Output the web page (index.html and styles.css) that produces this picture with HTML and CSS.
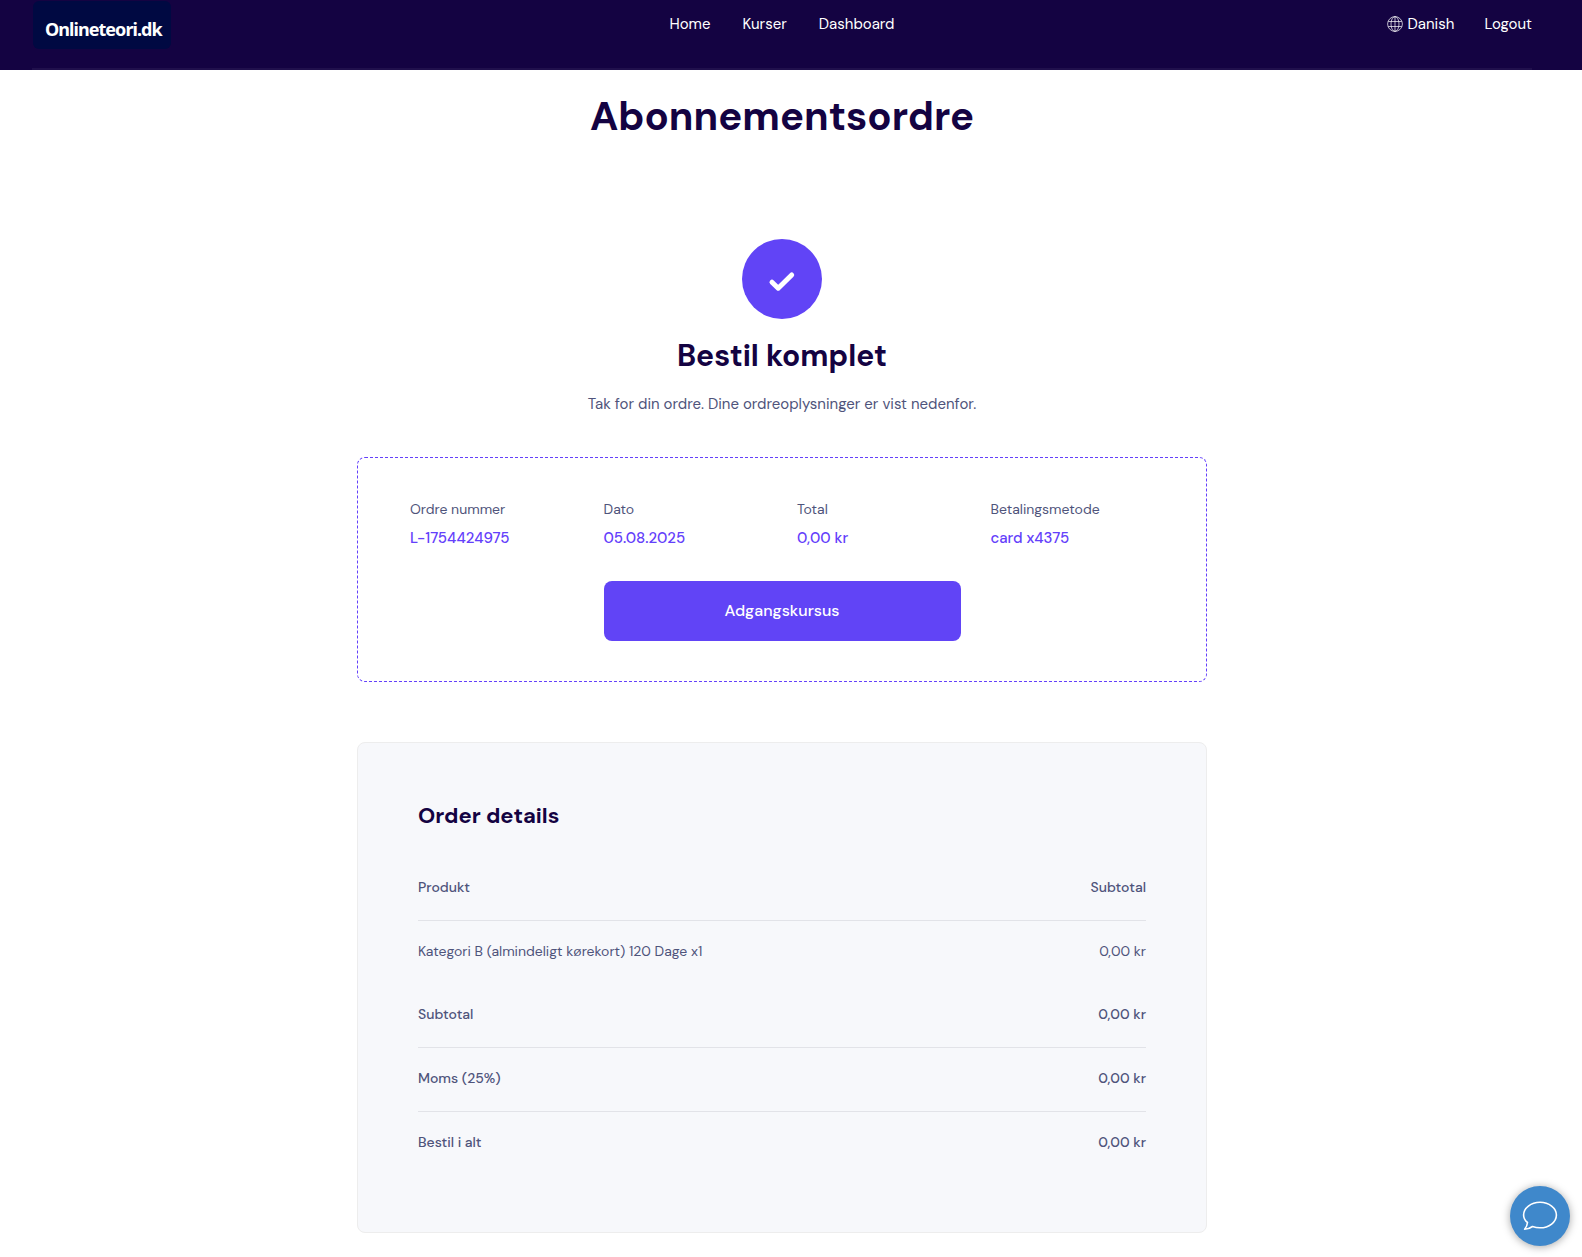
FILE: index.html
```html
<!DOCTYPE html>
<html lang="da">
<head>
  <meta charset="UTF-8" />
  <meta name="viewport" content="width=device-width, initial-scale=1.0"/>
  <title>Abonnementsordre</title>
  <link rel="stylesheet" href="styles.css">
</head>
<body>

  <header class="header">
    <div class="header-inner">
      <a class="logo" href="#">Onlineteori.dk</a>
      <nav class="menu">
        <a href="#">Home</a>
        <a href="#">Kurser</a>
        <a href="#">Dashboard</a>
      </nav>
      <div class="account">
        <a class="language" href="#">
          <svg width="16" height="16" viewBox="0 0 16 16" fill="none" stroke="currentColor" stroke-width="0.7">
            <circle cx="8" cy="8" r="7.4"/>
            <ellipse cx="8" cy="8" rx="4" ry="7.4"/>
            <path d="M8 .6v14.8M1.200 5.500h13.600M1.200 10.500h13.600"/>
          </svg>
          <span>Danish</span>
        </a>
        <a href="#">Logout</a>
      </div>
    </div>
  </header>

  <main class="page">
    <h1>Abonnementsordre</h1>

    <section class="completed">
      <div class="completed-icon">
        <svg width="28" height="22" viewBox="0 0 28 22" fill="none" stroke="#fff" stroke-width="5" stroke-linecap="round" stroke-linejoin="round">
          <path d="M4 11.2l6.2 6L23.7 4"/>
        </svg>
      </div>
      <h2>Bestil komplet</h2>
      <p>Tak for din ordre. Dine ordreoplysninger er vist nedenfor.</p>
    </section>

    <section class="summary">
      <div class="summary-grid">
        <div>
          <div class="label">Ordre nummer</div>
          <div class="value">L-1754424975</div>
        </div>
        <div>
          <div class="label">Dato</div>
          <div class="value">05.08.2025</div>
        </div>
        <div>
          <div class="label">Total</div>
          <div class="value">0,00 kr</div>
        </div>
        <div>
          <div class="label">Betalingsmetode</div>
          <div class="value">card x4375</div>
        </div>
      </div>
      <a class="button" href="#">Adgangskursus</a>
    </section>

    <section class="details">
      <h5>Order details</h5>
      <div class="row line medium"><span>Produkt</span><span>Subtotal</span></div>
      <div class="row"><span>Kategori B (almindeligt kørekort) 120 Dage x1</span><span>0,00 kr</span></div>
      <div class="row line medium"><span>Subtotal</span><span>0,00 kr</span></div>
      <div class="row line medium"><span>Moms (25%)</span><span>0,00 kr</span></div>
      <div class="row medium"><span>Bestil i alt</span><span>0,00 kr</span></div>
    </section>
  </main>

  <button class="chat" aria-label="Chat">
    <svg width="36" height="30" viewBox="0 0 36 30" fill="none" stroke="#fff" stroke-width="1.6" stroke-linejoin="round">
      <path d="M5.500 21.500C2.800 19.400 1.600 16.900 1.600 14 1.600 7 8.900 1.300 18 1.300S34.400 7 34.400 14 27.100 26.800 18 26.800c-2.700 0-5.300-.5-7.500-1.300C8.400 27 5.700 28.300 2.600 28.300c1.700-2 2.700-4.300 2.900-6.800z"/>
    </svg>
  </button>

</body>
</html>
```

FILE: styles.css
```css
* {
  box-sizing: border-box;
}

body {
  margin: 0;
  font-family: 'DM Sans', 'Inter', sans-serif;
  font-size: 15px;
  line-height: 26px;
  background-color: #ffffff;
  color: #4f547b;
  height: 1257px;
  overflow: hidden;
  -webkit-font-smoothing: antialiased;
}

a {
  color: inherit;
  text-decoration: none;
}

.header {
  height: 70px;
  background-color: #140342;
  color: #ffffff;
}

.header-inner {
  width: 1500px;
  height: 70px;
  margin-left: 32px;
  display: grid;
  grid-template-columns: 1fr auto 1fr;
  align-items: start;
  border-bottom: 2px solid #20104c;
}

.logo {
  width: 138px;
  height: 48px;
  margin: 1px 0 0 1px;
  padding: 15px 0 0 12px;
  border-radius: 6px;
  background-color: #000942;
  font-family: 'Noto Sans', sans-serif;
  font-size: 18px;
  font-weight: 700;
  letter-spacing: -0.95px;
}

.menu {
  display: flex;
  gap: 32px;
  padding-top: 11px;
}

.account {
  display: flex;
  justify-content: flex-end;
  gap: 30px;
  padding-top: 11px;
}

.language {
  display: flex;
  align-items: center;
  gap: 5px;
}

.page {
  width: 850px;
  margin-left: 357px;
}

h1, h2, h5, p {
  margin: 0;
}

h1, h2, h5 {
  color: #140342;
  font-weight: 700;
}

h1 {
  padding-top: 20px;
  font-size: 40px;
  line-height: 52px;
  text-align: center;
}

.completed {
  display: flex;
  flex-direction: column;
  align-items: center;
  margin-top: 97px;
}

.completed-icon {
  width: 80px;
  height: 80px;
  border-radius: 50%;
  background-color: #6144f6;
  display: flex;
  align-items: center;
  justify-content: center;
  padding-top: 5px;
}

.completed h2 {
  margin-top: 14px;
  font-size: 30px;
  line-height: 45px;
}

.completed p {
  margin-top: 13px;
}

.summary {
  height: 225px;
  margin-top: 40px;
  padding: 38px 52px 0;
  border: 1px dashed #6440fb;
  border-radius: 8px;
}

.summary-grid {
  display: grid;
  grid-template-columns: repeat(4, 193.5px);
}

.label {
  font-size: 14px;
}

.value {
  margin-top: 3px;
  font-weight: 500;
  color: #6440fb;
}

.button {
  display: flex;
  align-items: center;
  justify-content: center;
  width: 357px;
  height: 60px;
  margin: 30px 0 0 194px;
  padding-right: 1px;
  border-radius: 8px;
  background-color: #6144f6;
  color: #ffffff;
  font-size: 16px;
  font-weight: 500;
}

.details {
  height: 491px;
  margin-top: 60px;
  padding: 55px 60px 0;
  border: 1px solid #ededed;
  border-radius: 8px;
  background-color: #f7f8fb;
}

.details h5 {
  font-size: 22px;
  line-height: 36px;
  margin-bottom: 23px;
}

.row {
  display: flex;
  justify-content: space-between;
  height: 63px;
  padding-top: 17px;
  font-size: 14px;
}

.line {
  height: 64px;
  border-bottom: 1px solid #e2e3e8;
}

.medium {
  font-weight: 500;
}

.chat {
  position: fixed;
  right: 12px;
  bottom: 11px;
  width: 60px;
  height: 60px;
  padding: 0;
  border: 0;
  border-radius: 50%;
  background-color: #3f88cb;
  box-shadow: 0 1px 8px rgba(0,0,0,0.35);
  display: flex;
  align-items: center;
  justify-content: center;
}
```
